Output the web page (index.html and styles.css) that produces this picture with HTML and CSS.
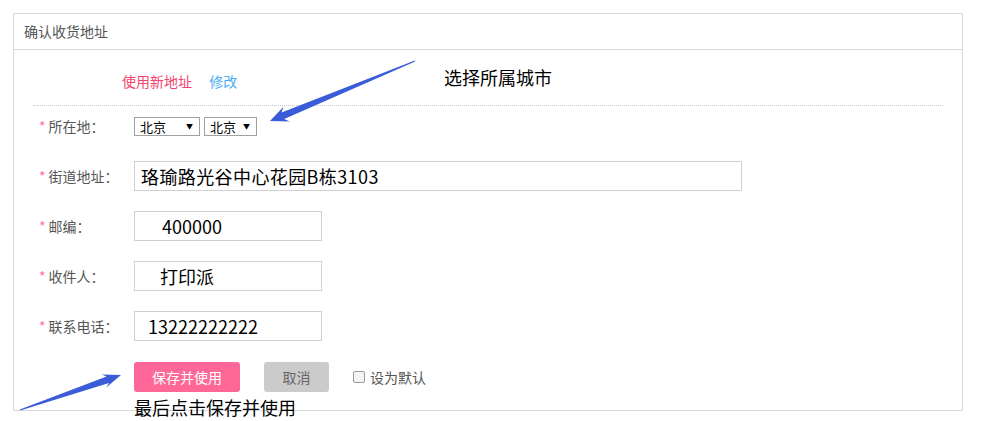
FILE: index.html
```html
<!DOCTYPE html>
<html lang="zh-CN">
<head>
<meta charset="UTF-8">
<meta name="viewport" content="width=device-width, initial-scale=1.0">
<title>确认收货地址</title>
<link rel="stylesheet" href="styles.css">
</head>
<body>
<div id="wrap">
    <div class="addr-box">
        <div class="addr-hd">确认收货地址</div>
        <div class="addr-bd">
            <div class="addr-links">
                <a href="javascript:;" class="link-new">使用新地址</a>
                <a href="javascript:;" class="link-edit">修改</a>
            </div>
            <div class="form">
                <div class="row">
                    <label class="lbl"><i>*</i>所在地：</label>
                    <span class="sel sel-w1">
                        <select><option>北京</option></select>
                    </span>
                    <span class="sel sel-w2">
                        <select><option>北京</option></select>
                    </span>
                </div>
                <div class="row">
                    <label class="lbl"><i>*</i>街道地址：</label>
                    <input type="text" class="ipt ipt-long" value="珞瑜路光谷中心花园B栋3103">
                </div>
                <div class="row">
                    <label class="lbl"><i>*</i>邮编：</label>
                    <input type="text" class="ipt ipt-zip" value="400000">
                </div>
                <div class="row">
                    <label class="lbl"><i>*</i>收件人：</label>
                    <input type="text" class="ipt ipt-name" value="打印派">
                </div>
                <div class="row">
                    <label class="lbl"><i>*</i>联系电话：</label>
                    <input type="text" class="ipt ipt-tel" value="13222222222">
                </div>
                <div class="row row-btns">
                    <a href="javascript:;" class="btn btn-save">保存并使用</a>
                    <a href="javascript:;" class="btn btn-cancel">取消</a>
                    <label class="chk"><input type="checkbox">设为默认</label>
                </div>
            </div>
        </div>
    </div>

    <!-- 标注 -->
    <svg class="marks" width="984" height="421" viewBox="0 0 984 421">
        <polygon fill="#3a5cd8" points="414.8,60.5 281.6,112.5 283.5,106.7 270,121 289.7,121.5 284.2,118.9 415.2,61.5"/>
        <polygon fill="#3a5cd8" points="19.8,409.5 106.6,376.4 101.7,374.4 121,375 106.3,387.6 109,383 20.2,410.5"/>
    </svg>
    <p class="tip tip-city">选择所属城市</p>
    <p class="tip tip-save">最后点击保存并使用</p>
</div>
</body>
</html>
```

FILE: styles.css
```css
* {
    box-sizing: border-box;
}
body {
    margin: 0;
    font-family: "Noto Sans CJK SC", "Noto Sans", sans-serif;
    color: #555;
    background: #fff;
}
#wrap {
    position: relative;
    width: 984px;
    height: 421px;
    padding: 13px 0 0 13px;
    overflow: hidden;
}
.addr-box {
    width: 950px;
    border: 1px solid #d9d9d9;
}
.addr-hd {
    height: 36px;
    padding-left: 10px;
    font-size: 14px;
    line-height: 35px;
    color: #555;
    border-bottom: 1px solid #d9d9d9;
}
.addr-bd {
    padding: 0 19px 18px;
}
.addr-links {
    padding: 21px 0 14px 89px;
    font-size: 14px;
    line-height: 20px;
    border-bottom: 1px dotted #c8c8c8;
}
.addr-links a {
    text-decoration: none;
}
.link-new {
    color: #f5436d;
}
.link-edit {
    margin-left: 14px;
    color: #4aaef2;
}
.form {
    padding-top: 5px;
}
.row {
    display: flex;
    align-items: center;
    height: 30px;
    margin-bottom: 20px;
}
.lbl {
    width: 101px;
    padding-left: 6px;
    font-size: 14px;
    color: #555;
}
.lbl i {
    font-style: normal;
    color: #ff6f9c;
    margin-right: 3px;
}
.sel {
    position: relative;
    display: block;
    height: 19px;
    margin-right: 4px;
}
.sel select {
    display: block;
    width: 100%;
    height: 19px;
    padding: 0 0 0 5px;
    font: 13px/17px "Noto Sans CJK SC", sans-serif;
    color: #000;
    background: #fff;
    border: 1px solid #a0a0a0;
    border-radius: 0;
    -webkit-appearance: none;
    appearance: none;
    outline: none;
}
.sel:after {
    content: "▼";
    position: absolute;
    right: 7px;
    top: 3px;
    font-size: 7px;
    line-height: 13px;
    color: #000;
}
.sel-w1 {
    width: 66px;
}
.sel-w2 {
    width: 53px;
}
.ipt {
    height: 30px;
    font: 18px/28px "Noto Sans CJK SC", sans-serif;
    color: #000;
    border: 1px solid #d0d0d0;
    outline: none;
    padding: 0 0 0 6px;
}
.ipt-long {
    width: 608px;
    letter-spacing: 0.4px;
}
.ipt-zip,
.ipt-name,
.ipt-tel {
    width: 188px;
}
.ipt-zip {
    padding-left: 27px;
}
.ipt-name {
    padding-left: 25px;
}
.ipt-tel {
    padding-left: 13px;
}
.row-btns {
    margin: 21px 0 0;
    padding-left: 101px;
}
.btn {
    display: inline-block;
    height: 30px;
    font-size: 14px;
    line-height: 30px;
    text-align: center;
    text-decoration: none;
    border-radius: 3px;
}
.btn-save {
    width: 106px;
    color: #fff;
    background: #fe6797;
}
.btn-cancel {
    width: 65px;
    margin-left: 24px;
    color: #666;
    background: #cbcbcb;
}
.chk {
    display: flex;
    align-items: center;
    margin-left: 24px;
    font-size: 14px;
    color: #555;
}
.chk input {
    -webkit-appearance: none;
    appearance: none;
    width: 12px;
    height: 12px;
    margin: 0 5px 0 0;
    border: 1px solid #999;
    border-radius: 2px;
    background: #f4f4f4;
}
.marks {
    position: absolute;
    left: 0;
    top: 0;
    pointer-events: none;
}
.tip {
    position: absolute;
    margin: 0;
    font-size: 18px;
    line-height: 24px;
    color: #000;
}
.tip-city {
    left: 444px;
    top: 65px;
}
.tip-save {
    left: 134px;
    top: 395px;
}
```
